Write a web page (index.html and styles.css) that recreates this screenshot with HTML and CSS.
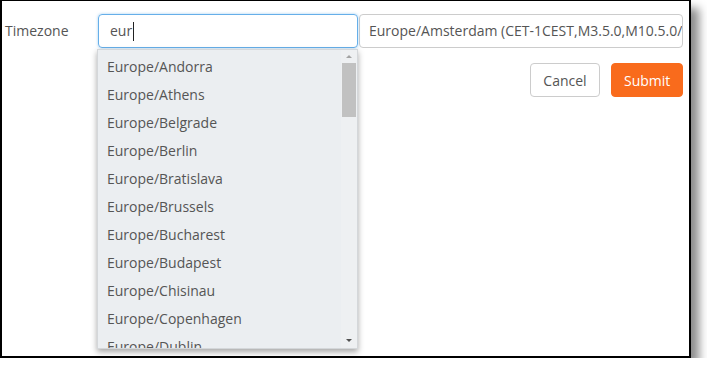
FILE: index.html
```html
<!DOCTYPE html>
<html>
<head>
<meta charset="utf-8">
<link rel="stylesheet" href="styles.css">
</head>
<body>
<div class="frame">
  <div class="row">
    <div class="label">Timezone</div>
    <div class="search-wrap">
      <div class="search">eur<span class="caret"></span></div>
      <div class="dropdown">
        <ul class="options">
          <li>Europe/Andorra</li>
          <li>Europe/Athens</li>
          <li>Europe/Belgrade</li>
          <li>Europe/Berlin</li>
          <li>Europe/Bratislava</li>
          <li>Europe/Brussels</li>
          <li>Europe/Bucharest</li>
          <li>Europe/Budapest</li>
          <li>Europe/Chisinau</li>
          <li>Europe/Copenhagen</li>
          <li>Europe/Dublin</li>
        </ul>
        <div class="scrollbar">
          <div class="arrow up"></div>
          <div class="thumb"></div>
          <div class="spacer"></div>
          <div class="arrow down"></div>
        </div>
      </div>
    </div>
    <div class="value">Europe/Amsterdam (CET-1CEST,M3.5.0,M10.5.0/3)</div>
  </div>
  <div class="actions">
    <button class="btn cancel">Cancel</button>
    <button class="btn submit">Submit</button>
  </div>
</div>
</body>
</html>
```
FILE: styles.css
```css
html, body {
  margin: 0;
  padding: 0;
  background: #fff;
}
body {
  font-family: "Open Sans", "Liberation Sans", sans-serif;
  font-size: 14px;
  color: #555;
}
.frame {
  box-sizing: border-box;
  width: 691px;
  height: 358px;
  border: 2px solid #000;
  border-top-width: 1px;
  background: #fff;
  box-shadow: 8px 8px 9px rgba(0, 0, 0, 0.45);
}
.row {
  display: flex;
  margin-top: 13px;
  padding-left: 3px;
}
.label {
  width: 93px;
  line-height: 34px;
  color: #555;
}
.search-wrap {
  position: relative;
  width: 260px;
}
.search {
  box-sizing: border-box;
  height: 34px;
  border: 1px solid #66afe9;
  border-radius: 4px;
  padding-left: 11px;
  line-height: 32px;
  box-shadow: 0 0 3px rgba(102, 175, 233, 0.6);
  display: flex;
  align-items: center;
  color: #555;
}
.caret {
  display: inline-block;
  width: 1px;
  height: 19px;
  background: #222;
  margin-left: 1px;
}
.dropdown {
  position: absolute;
  top: 35px;
  left: -1px;
  width: 261px;
  height: 300px;
  background: #ebeef1;
  border: 1px solid #d4d7da;
  box-sizing: border-box;
  box-shadow: 0 3px 6px rgba(0, 0, 0, 0.35);
  display: flex;
  overflow: hidden;
  z-index: 2;
}
.options {
  list-style: none;
  margin: 0;
  padding: 3px 0 0 0;
  flex: 1;
  overflow: hidden;
}
.options li {
  height: 28px;
  line-height: 28px;
  padding-left: 9px;
  white-space: nowrap;
  color: #555;
}
.scrollbar {
  width: 16px;
  display: flex;
  flex-direction: column;
  align-items: center;
  background: #eef0f2;
}
.arrow {
  height: 13px;
  width: 16px;
  position: relative;
}
.arrow::after {
  content: "";
  position: absolute;
  left: 5px;
  width: 0;
  height: 0;
  border-left: 3px solid transparent;
  border-right: 3px solid transparent;
}
.arrow.up::after {
  top: 5px;
  border-bottom: 3px solid #a3a3a3;
}
.arrow.down::after {
  top: 4px;
  border-top: 3px solid #505050;
}
.thumb {
  width: 14px;
  height: 54px;
  background: #c1c1c1;
}
.spacer {
  flex: 1;
}
.value {
  box-sizing: border-box;
  width: 324px;
  height: 34px;
  margin-left: 1px;
  border: 1px solid #ccc;
  border-radius: 4px;
  padding-left: 9px;
  line-height: 32px;
  white-space: nowrap;
  overflow: hidden;
  color: #555;
}
.actions {
  display: flex;
  justify-content: flex-end;
  gap: 11px;
  margin-top: 15px;
  padding-right: 6px;
}
.btn {
  font-family: "Open Sans", "Liberation Sans", sans-serif;
  font-size: 14px;
  height: 34px;
  border-radius: 4px;
  box-sizing: border-box;
  padding: 0 12px;
  cursor: pointer;
}
.cancel {
  width: 70px;
  background: #fff;
  border: 1px solid #ccc;
  color: #555;
}
.submit {
  width: 72px;
  background: #f96b1c;
  border: 1px solid #f96b1c;
  color: #fff;
}
```
